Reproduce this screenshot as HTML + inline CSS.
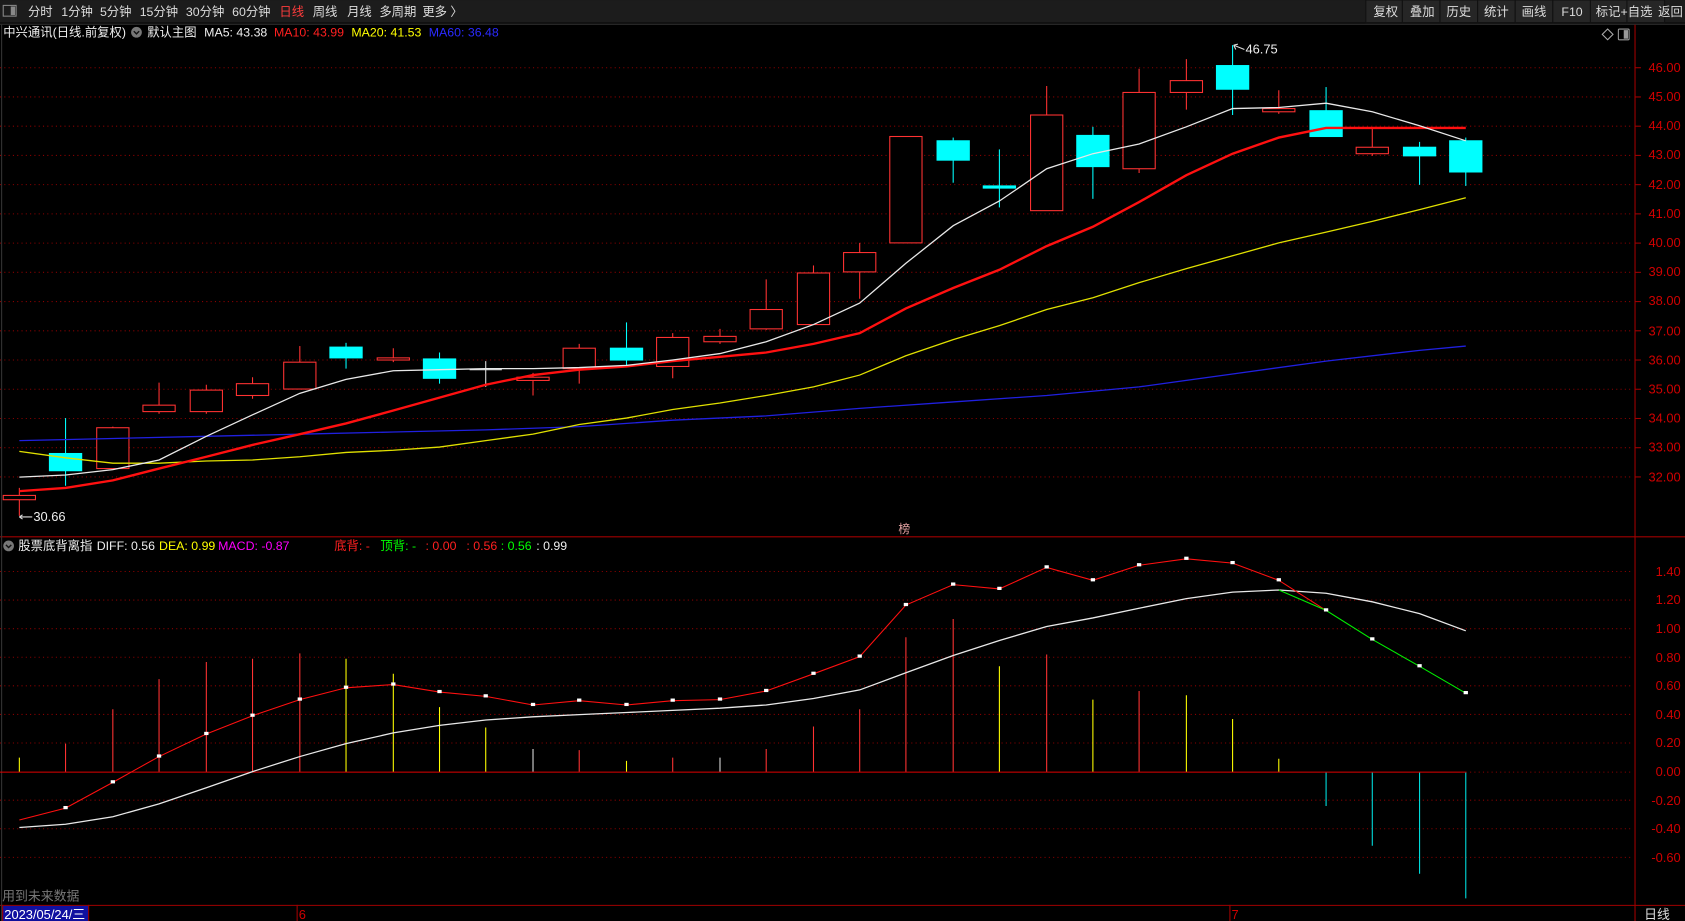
<!DOCTYPE html>
<html><head><meta charset="utf-8"><style>
html,body{margin:0;padding:0;background:#000;overflow:hidden}
svg{display:block}
text{font-family:"Liberation Sans","Noto Sans CJK SC",sans-serif}
</style></head><body>
<svg width="1685" height="921" viewBox="0 0 1568 857" xmlns="http://www.w3.org/2000/svg">
<rect width="1568" height="857" fill="#000"/>
<rect x="0" y="0" width="1568" height="21" fill="#1c1c1c"/>
<line x1="0" y1="22.5" x2="1568" y2="22.5" stroke="#333" stroke-width="1"/>
<rect x="3" y="5" width="12" height="10" fill="none" stroke="#888" stroke-width="1"/>
<rect x="10" y="6" width="4" height="8" fill="#888"/>
<g font-size="11.5" fill="#ddd">
<text x="26" y="15">分时</text><text x="57" y="15">1分钟</text><text x="93" y="15">5分钟</text>
<text x="130" y="15">15分钟</text><text x="173" y="15">30分钟</text><text x="216" y="15">60分钟</text>
<text x="260" y="15" fill="#ff3c3c">日线</text><text x="291" y="15">周线</text><text x="323" y="15">月线</text>
<text x="353" y="15">多周期</text><text x="393" y="15">更多 〉</text>
</g>
<g fill="#262626" stroke="#111">
<rect x="1271" y="0" width="34" height="21"/><rect x="1305" y="0" width="35" height="21"/><rect x="1340" y="0" width="35" height="21"/>
<rect x="1375" y="0" width="35" height="21"/><rect x="1410" y="0" width="35" height="21"/><rect x="1445" y="0" width="35" height="21"/>
<rect x="1480" y="0" width="34" height="21"/><rect x="1514" y="0" width="35" height="21"/>
</g>
<g font-size="11.5" fill="#ddd">
<text x="1278" y="15">复权</text><text x="1312" y="15">叠加</text><text x="1346" y="15">历史</text><text x="1381" y="15">统计</text>
<text x="1416" y="15">画线</text><text x="1453" y="15">F10</text><text x="1485" y="15">标记</text><text x="1508" y="15">+自选</text><text x="1543" y="15">返回</text>
</g>
<g font-size="11.5">
<text x="3" y="34" fill="#eee">中兴通讯(日线.前复权)</text>
<circle cx="127" cy="30" r="5" fill="#777"/><path d="M124.5,29 L127,31.5 L129.5,29" stroke="#111" fill="none" stroke-width="1.3"/>
<text x="137" y="34" fill="#eee">默认主图</text>
<text x="190" y="34" fill="#eee">MA5: 43.38</text>
<text x="255" y="34" fill="#ff2020">MA10: 43.99</text>
<text x="327" y="34" fill="#ffff00">MA20: 41.53</text>
<text x="399" y="34" fill="#2a2aff">MA60: 36.48</text>
</g>
<path d="M1496,27 L1501,32 L1496,37 L1491,32 Z" fill="none" stroke="#aaa"/>
<rect x="1506" y="27" width="10" height="10" rx="1" fill="none" stroke="#999"/><rect x="1511" y="28" width="4" height="8" fill="#999"/>
<line x1="1521.5" y1="23" x2="1521.5" y2="857" stroke="#a00000"/>
<line x1="0" y1="499.5" x2="1568" y2="499.5" stroke="#a00000"/>
<line x1="0" y1="842.5" x2="1568" y2="842.5" stroke="#a00000"/>
<line x1="1.5" y1="23" x2="1.5" y2="857" stroke="#333"/>
<g stroke="#8a0000" stroke-dasharray="1,3" stroke-width="1">
<line x1="0" x2="1518" y1="63" y2="63"/><line x1="0" x2="1518" y1="90.2" y2="90.2"/><line x1="0" x2="1518" y1="117.4" y2="117.4"/>
<line x1="0" x2="1518" y1="144.6" y2="144.6"/><line x1="0" x2="1518" y1="171.8" y2="171.8"/><line x1="0" x2="1518" y1="199" y2="199"/>
<line x1="0" x2="1518" y1="226.2" y2="226.2"/><line x1="0" x2="1518" y1="253.4" y2="253.4"/><line x1="0" x2="1518" y1="280.6" y2="280.6"/>
<line x1="0" x2="1518" y1="307.8" y2="307.8"/><line x1="0" x2="1518" y1="335" y2="335"/><line x1="0" x2="1518" y1="362.2" y2="362.2"/>
<line x1="0" x2="1518" y1="389.4" y2="389.4"/><line x1="0" x2="1518" y1="416.6" y2="416.6"/><line x1="0" x2="1518" y1="443.8" y2="443.8"/>
</g>
<g font-size="12" fill="#d00000" text-anchor="end">
<text x="1564" y="67">46.00</text><text x="1564" y="94">45.00</text><text x="1564" y="121">44.00</text><text x="1564" y="148">43.00</text>
<text x="1564" y="176">42.00</text><text x="1564" y="203">41.00</text><text x="1564" y="230">40.00</text><text x="1564" y="257">39.00</text>
<text x="1564" y="284">38.00</text><text x="1564" y="312">37.00</text><text x="1564" y="339">36.00</text><text x="1564" y="366">35.00</text>
<text x="1564" y="393">34.00</text><text x="1564" y="420">33.00</text><text x="1564" y="448">32.00</text>
</g>
<g stroke="#a00000">
<line x1="1521" x2="1527" y1="63" y2="63"/><line x1="1521" x2="1527" y1="90.2" y2="90.2"/><line x1="1521" x2="1527" y1="117.4" y2="117.4"/><line x1="1521" x2="1527" y1="144.6" y2="144.6"/><line x1="1521" x2="1527" y1="171.8" y2="171.8"/><line x1="1521" x2="1527" y1="199" y2="199"/><line x1="1521" x2="1527" y1="226.2" y2="226.2"/><line x1="1521" x2="1527" y1="253.4" y2="253.4"/><line x1="1521" x2="1527" y1="280.6" y2="280.6"/><line x1="1521" x2="1527" y1="307.8" y2="307.8"/><line x1="1521" x2="1527" y1="335" y2="335"/><line x1="1521" x2="1527" y1="362.2" y2="362.2"/><line x1="1521" x2="1527" y1="389.4" y2="389.4"/><line x1="1521" x2="1527" y1="416.6" y2="416.6"/><line x1="1521" x2="1527" y1="443.8" y2="443.8"/>
</g>
<g stroke="#ff3232" fill="#000" stroke-width="1">
<path d="M18,454V461M18,465V480"/><rect x="3" y="461" width="30" height="4"/>
<path d="M105,397V398M105,436V437"/><rect x="90" y="398" width="30" height="38"/>
<path d="M148,356V377M148,383V385"/><rect x="133" y="377" width="30" height="6"/>
<path d="M192,358V363M192,383V385"/><rect x="177" y="363" width="30" height="20"/>
<path d="M235,351V357M235,368V371"/><rect x="220" y="357" width="30" height="11"/>
<path d="M279,322V337M279,362V362"/><rect x="264" y="337" width="30" height="25"/>
<path d="M366,324V333M366,335V337"/><rect x="351" y="333" width="30" height="2"/>
<path d="M496,347V351M496,354V368"/><rect x="481" y="351" width="30" height="3"/>
<path d="M539,320V324M539,343V357"/><rect x="524" y="324" width="30" height="19"/>
<path d="M626,310V314M626,341V352"/><rect x="611" y="314" width="30" height="27"/>
<path d="M670,306V313M670,318V320"/><rect x="655" y="313" width="30" height="5"/>
<path d="M713,260V288M713,306V307"/><rect x="698" y="288" width="30" height="18"/>
<path d="M757,247V254"/><rect x="742" y="254" width="30" height="48"/>
<path d="M800,226V235M800,253V278"/><rect x="785" y="235" width="30" height="18"/>
<rect x="828" y="127" width="30" height="99"/>
<path d="M974,80V107"/><rect x="959" y="107" width="30" height="89"/>
<path d="M1060,64V86M1060,157V161"/><rect x="1045" y="86" width="30" height="71"/>
<path d="M1104,55V75M1104,86V102"/><rect x="1089" y="75" width="30" height="11"/>
<path d="M1190,84V101M1190,104V106"/><rect x="1175" y="101" width="30" height="3"/>
<path d="M1277,120V137M1277,143V145"/><rect x="1262" y="137" width="30" height="6"/>
</g>
<g stroke="#00ffff" fill="#00ffff" stroke-width="1">
<path d="M61,389V452"/><rect x="46" y="422" width="30" height="16"/>
<path d="M322,319V343"/><rect x="307" y="323" width="30" height="10"/>
<path d="M409,328V357"/><rect x="394" y="334" width="30" height="18"/>
<path d="M583,300V340"/><rect x="568" y="324" width="30" height="11"/>
<path d="M887,128V170"/><rect x="872" y="131" width="30" height="18"/>
<path d="M930,139V193"/><rect x="915" y="173" width="30" height="2"/>
<path d="M1017,118V185"/><rect x="1002" y="126" width="30" height="29"/>
<path d="M1147,42V107"/><rect x="1132" y="61" width="30" height="22"/>
<path d="M1234,81V127"/><rect x="1219" y="103" width="30" height="24"/>
<path d="M1321,132V172"/><rect x="1306" y="137" width="30" height="8"/>
<path d="M1364,128V173"/><rect x="1349" y="131" width="30" height="29"/>
</g>
<path d="M452,336V360M437,344H467" stroke="#ddd"/>
<polyline fill="none" stroke="#2020e0" stroke-width="1.2" points="18,410 105,408 192,406 279,404 366,402 452,400 539,397 626,391 713,387 800,380 887,374 974,368 1060,360 1147,348 1234,336 1321,326 1364,322"/>
<polyline fill="none" stroke="#e0e000" stroke-width="1.2" points="18,420 61,426 105,431 148,431 192,429 235,428 279,425 322,421 366,419 409,416 452,410 496,404 539,395 583,389 626,381 670,375 713,368 757,360 800,349 843,331 887,316 930,303 974,288 1017,277 1060,263 1104,250 1147,238 1190,226 1234,216 1277,206 1321,195 1364,184"/>
<polyline fill="none" stroke="#ff1010" stroke-width="2.2" points="18,457 61,454 105,447 148,436 192,425 235,414 279,404 322,394 366,382 409,370 452,358 496,349 539,344 583,341 626,336 670,332 713,328 757,320 800,310 843,287 887,268 930,251 974,229 1017,211 1060,188 1104,163 1147,143 1190,128 1234,119 1277,119 1321,119 1364,119"/>
<polyline fill="none" stroke="#e8e8e8" stroke-width="1.2" points="18,444 61,442 105,437 148,428 192,406 235,386 279,366 322,353 366,345 409,344 452,343 496,343 539,342 583,340 626,335 670,329 713,318 757,302 800,282 843,245 887,210 930,187 974,157 1017,143 1060,134 1104,118 1147,101 1190,100 1234,96 1277,104 1321,117 1364,131"/>
<path d="M1148,42L1158,46M1148,42l2,4M1148,42l4,-1" stroke="#ddd" fill="none"/>
<text x="1159" y="50" font-size="12" fill="#eee">46.75</text>
<path d="M18,481H30M18,481l3,-2M18,481l3,2" stroke="#ddd" fill="none"/>
<text x="31" y="485" font-size="12" fill="#eee">30.66</text>
<rect x="836" y="485" width="12" height="12" fill="#000"/>
<text x="836" y="496" font-size="11" fill="#e0a0a0">榜</text>
<g font-size="11.5">
<circle cx="8" cy="508" r="5" fill="#777"/><path d="M5.5,507 L8,509.5 L10.5,507" stroke="#111" fill="none" stroke-width="1.3"/>
<text x="17" y="512" fill="#eee">股票底背离指</text>
<text x="90" y="512" fill="#eee">DIFF: 0.56</text>
<text x="148" y="512" fill="#ffff00">DEA: 0.99</text>
<text x="203" y="512" fill="#ff00ff">MACD: -0.87</text>
<text x="311" y="512" fill="#ff2020">底背: -</text>
<text x="354" y="512" fill="#00ff00">顶背: -</text>
<text x="396" y="512" fill="#ff2020">: 0.00</text>
<text x="434" y="512" fill="#ff2020">: 0.56</text>
<text x="466" y="512" fill="#00ff00">: 0.56</text>
<text x="499" y="512" fill="#eee">: 0.99</text>
</g>
<g stroke="#8a0000" stroke-dasharray="1,3">
<line x1="0" x2="1518" y1="531.8" y2="531.8"/><line x1="0" x2="1518" y1="558.4" y2="558.4"/><line x1="0" x2="1518" y1="585" y2="585"/>
<line x1="0" x2="1518" y1="611.6" y2="611.6"/><line x1="0" x2="1518" y1="638.2" y2="638.2"/><line x1="0" x2="1518" y1="664.8" y2="664.8"/>
<line x1="0" x2="1518" y1="691.4" y2="691.4"/><line x1="1364" x2="1518" y1="718.5" y2="718.5"/><line x1="0" x2="1518" y1="744.6" y2="744.6"/><line x1="0" x2="1518" y1="771.2" y2="771.2"/><line x1="0" x2="1518" y1="797.8" y2="797.8"/>
</g>
<line x1="0" x2="1364" y1="718.5" y2="718.5" stroke="#e00000"/>
<g font-size="12" fill="#d00000" text-anchor="end">
<text x="1564" y="536">1.40</text><text x="1564" y="562">1.20</text><text x="1564" y="589">1.00</text><text x="1564" y="616">0.80</text>
<text x="1564" y="642">0.60</text><text x="1564" y="669">0.40</text><text x="1564" y="695">0.20</text><text x="1564" y="722">0.00</text>
<text x="1564" y="749">-0.20</text><text x="1564" y="775">-0.40</text><text x="1564" y="802">-0.60</text>
</g>
<g stroke-width="1">
<path stroke="#ffff00" d="M18,705V718M322,613V718M366,627V718M409,658V718M452,677V718M583,708V718M930,620V718M1017,651V718M1104,647V718M1147,669V718M1190,706V718"/>
<path stroke="#ff3232" d="M61,692V718M105,660V718M148,632V718M192,616V718M235,613V718M279,608V718M539,698V718M626,705V718M713,697V718M757,676V718M800,660V718M843,593V718M887,576V718M974,609V718M1060,643V718"/>
<path stroke="#ddd" d="M496,697V718M670,705V718"/>
<path stroke="#00e0e0" d="M1234,719V750M1277,719V787M1321,719V813M1364,719V836"/>
</g>
<polyline fill="none" stroke="#e8e8e8" stroke-width="1.2" points="18,770 61,767 105,760 148,748 192,733 235,718 279,704 322,692 366,682 409,675 452,670 496,667 539,665 583,663 626,661 670,659 713,656 757,650 800,642 843,626 887,610 930,596 974,583 1017,575 1060,566 1104,557 1147,551 1190,549 1234,552 1277,560 1321,571 1364,587"/>
<polyline fill="none" stroke="#ff1010" stroke-width="1" points="18,763 61,752 105,728 148,704 192,683 235,666 279,651 322,640 366,637 409,644 452,648 496,656 539,652 583,656 626,652 670,651 713,643 757,627 800,611 843,563 887,544 930,548 974,528 1017,540 1060,526 1104,520 1147,524 1190,540 1234,568"/>
<polyline fill="none" stroke="#00ee00" stroke-width="1" points="1190,549 1234,568 1277,595 1321,620 1364,645"/>
<g fill="#fff">
<rect x="103" y="726" width="4" height="3"/><rect x="146" y="702" width="4" height="3"/><rect x="190" y="681" width="4" height="3"/><rect x="233" y="664" width="4" height="3"/><rect x="277" y="649" width="4" height="3"/><rect x="320" y="638" width="4" height="3"/><rect x="364" y="635" width="4" height="3"/><rect x="407" y="642" width="4" height="3"/><rect x="450" y="646" width="4" height="3"/><rect x="494" y="654" width="4" height="3"/><rect x="537" y="650" width="4" height="3"/><rect x="581" y="654" width="4" height="3"/><rect x="624" y="650" width="4" height="3"/><rect x="668" y="649" width="4" height="3"/><rect x="711" y="641" width="4" height="3"/><rect x="755" y="625" width="4" height="3"/><rect x="798" y="609" width="4" height="3"/><rect x="841" y="561" width="4" height="3"/><rect x="885" y="542" width="4" height="3"/><rect x="928" y="546" width="4" height="3"/><rect x="972" y="526" width="4" height="3"/><rect x="1015" y="538" width="4" height="3"/><rect x="1058" y="524" width="4" height="3"/><rect x="1102" y="518" width="4" height="3"/><rect x="1145" y="522" width="4" height="3"/><rect x="1188" y="538" width="4" height="3"/><rect x="1232" y="566" width="4" height="3"/><rect x="1275" y="593" width="4" height="3"/><rect x="1319" y="618" width="4" height="3"/><rect x="1362" y="643" width="4" height="3"/><rect x="59" y="750" width="4" height="3"/>
</g>
<text x="2" y="838" font-size="12" fill="#777">用到未来数据</text>
<rect x="2" y="843" width="80" height="14" fill="#1010a0"/>
<text x="4" y="855" font-size="12" fill="#fff">2023/05/24/三</text>
<line x1="2.5" y1="842" x2="2.5" y2="857" stroke="#a00000"/>
<line x1="82.5" y1="842" x2="82.5" y2="857" stroke="#a00000"/>
<line x1="276.5" y1="842" x2="276.5" y2="857" stroke="#a00000"/>
<text x="278" y="855" font-size="12" fill="#d00000">6</text>
<line x1="1144.5" y1="842" x2="1144.5" y2="857" stroke="#a00000"/>
<text x="1146" y="855" font-size="12" fill="#d00000">7</text>
<text x="1530" y="855" font-size="12" fill="#ddd">日线</text>
</svg>
</body></html>
